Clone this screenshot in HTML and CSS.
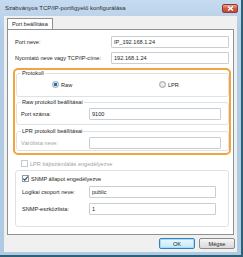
FILE: index.html
```html
<!DOCTYPE html>
<html lang="hu">
<head>
    <meta charset="UTF-8">
    <title>Szabványos TCP/IP-portfigyelő konfigurálása</title>
    <link rel="stylesheet" href="styles.css">
</head>
<body>
    <!-- Dialog window -->
    <div class="window">
        <div class="titlebar">
            <span class="title">Szabványos TCP/IP-portfigyelő konfigurálása</span>
            <span class="close">
                <svg width="7" height="5" viewBox="0 0 7 5"><path d="M1 0.5 L6 4.5 M6 0.5 L1 4.5" stroke="#fff" stroke-width="1.4"/></svg>
            </span>
        </div>

        <div class="client">
            <div class="tabs"><div class="tab">Port beállítása</div></div>

            <div class="panel">
                <div class="row top-row">
                    <label class="lbl wide-lbl">Port neve:</label>
                    <input class="field" type="text" value="IP_192.168.1.24">
                </div>
                <div class="row top-row">
                    <label class="lbl wide-lbl">Nyomtató neve vagy TCP/IP-címe:</label>
                    <input class="field" type="text" value="192.168.1.24">
                </div>

                <!-- Highlighted protocol area -->
                <div class="highlight">
                    <fieldset class="group protocol">
                        <legend>Protokoll</legend>
                        <div class="radios">
                            <span class="opt"><span class="radio on"></span>Raw</span>
                            <span class="opt"><span class="radio"></span>LPR</span>
                        </div>
                    </fieldset>

                    <fieldset class="group raw">
                        <legend>Raw protokoll beállításai</legend>
                        <div class="row">
                            <label class="lbl">Port száma:</label>
                            <input class="field" type="text" value="9100">
                        </div>
                    </fieldset>

                    <fieldset class="group lpr">
                        <legend>LPR protokoll beállításai</legend>
                        <div class="row">
                            <label class="lbl disabled">Várólista neve:</label>
                            <input class="field" type="text" value="">
                        </div>
                    </fieldset>
                </div>

                <div class="checkrow lpr-count">
                    <span class="check off"></span>
                    <span class="disabled">LPR bájtszámlálás engedélyezve</span>
                </div>

                <fieldset class="group snmp">
                    <div class="checkrow">
                        <span class="check">
                            <svg width="7" height="7" viewBox="0 0 7 7"><path d="M1.3 3.6 L2.8 5.1 L5.8 1.6" fill="none" stroke="#2b4a7a" stroke-width="1.2"/></svg>
                        </span>
                        <span>SNMP állapot engedélyezve</span>
                    </div>
                    <div class="row">
                        <label class="lbl">Logikai csoport neve:</label>
                        <input class="field" type="text" value="public">
                    </div>
                    <div class="row">
                        <label class="lbl">SNMP-eszközlista:</label>
                        <input class="field" type="text" value="1">
                    </div>
                </fieldset>
            </div>

            <!-- Dialog buttons -->
            <div class="buttons">
                <button class="btn default">OK</button>
                <button class="btn">Mégse</button>
            </div>
        </div>
    </div>
</body>
</html>
```

FILE: styles.css
```css
/* General */
body {
    margin: 0;
    font-family: 'Liberation Sans', Arial, sans-serif;
    font-size: 5.6px;
    color: #1e1e1e;
    background: #2e6075;
}

/* Window frame */
.window {
    width: 243px;
    height: 257px;
    box-sizing: border-box;
    display: flex;
    flex-direction: column;
    overflow: hidden;
    background: linear-gradient(#c6dbef, #b3cce6 30px, #b0cae4);
    border-right: 2px solid #2e6075;
    border-bottom: 2px solid #2e6075;
}

.titlebar {
    height: 16px;
    flex: none;
    display: flex;
    align-items: center;
    justify-content: space-between;
    padding: 0 3px 0 5px;
    font-size: 6px;
}

.title {
    color: #2a2f36;
}

.close {
    width: 14px;
    height: 7px;
    display: flex;
    align-items: center;
    justify-content: center;
    background: linear-gradient(#e9a597, #cf5a44 50%, #c24a36);
    border: 1px solid #8c3b31;
    border-radius: 2px;
}

/* Client area */
.client {
    flex: 1;
    margin: 0 4px 3px 4px;
    padding: 2px 2px 0 3px;
    background: #f0f0f0;
    display: flex;
    flex-direction: column;
    min-height: 0;
}

.tabs {
    display: flex;
    height: 11px;
    flex: none;
}

.tab {
    height: 11px;
    padding: 0 4px;
    line-height: 11px;
    background: #fff;
    border: 1px solid #8e9194;
    border-bottom: none;
}

.panel {
    width: 227px;
    height: 206px;
    flex: none;
    box-sizing: border-box;
    background: #fff;
    border: 1px solid #8e9194;
    padding-top: 6px;
}

/* Rows and fields */
.row {
    display: flex;
    align-items: center;
}

.top-row {
    padding: 0 4px 0 7px;
    margin-bottom: 4px;
}

.lbl {
    width: 68px;
    flex: none;
    white-space: nowrap;
}

.wide-lbl {
    width: 96px;
}

.field {
    flex: 1;
    min-width: 0;
    height: 12px;
    box-sizing: border-box;
    margin: 0;
    padding: 0 2px;
    font-family: inherit;
    font-size: 5.6px;
    line-height: 10px;
    color: #1e1e1e;
    border: 1px solid #c9ced3;
    border-radius: 1px;
    background: #fff;
    outline: none;
}

.disabled {
    color: #a3a3a3;
}

/* Orange highlight */
.highlight {
    margin: 0 2px 0 5px;
    padding: 0 0 0 1px;
    border: 2px solid #f1a53c;
    border-radius: 5px;
    height: 87px;
    box-sizing: border-box;
}

/* Group boxes */
.group {
    margin: 0;
    padding: 0 7px 0 4px;
    border: 1px solid #dde2e6;
    border-radius: 3px;
    min-width: 0;
}

.group legend {
    padding: 0 1px;
    line-height: 7px;
}

.protocol {
    height: 27px;
    box-sizing: border-box;
}

.radios {
    display: flex;
    padding: 4px 0 0 31px;
}

.opt {
    display: flex;
    align-items: center;
    gap: 2px;
}

.opt:first-child {
    width: 107px;
}

.radio {
    width: 5px;
    height: 5px;
    border-radius: 50%;
    border: 1px solid #9ea3a8;
    background: radial-gradient(#f4f4f4, #d8d8d8);
}

.radio.on {
    background: radial-gradient(circle, #1f5fa8 0, #2c7bc4 1.5px, #dbe5ee 2px);
}

.raw {
    margin-top: 2px;
    padding-top: 2px;
    padding-bottom: 4px;
}

.lpr {
    margin-top: 3px;
    padding-top: 2px;
    padding-bottom: 1px;
}

/* Checkboxes */
.checkrow {
    display: flex;
    align-items: center;
    gap: 2px;
}

.check {
    width: 7px;
    height: 7px;
    box-sizing: border-box;
    border: 1px solid #8f9aa5;
    background: #fff;
    display: flex;
    align-items: center;
    justify-content: center;
}

.check svg {
    flex: none;
}

.check.off {
    border-color: #c5cacf;
}

.lpr-count {
    margin: 5px 0 0 13px;
}

.snmp {
    margin: 3px 4px 0 7px;
    padding: 4px 12px 8px 6px;
    height: 57px;
    box-sizing: border-box;
}

.snmp .checkrow {
    margin-bottom: 4px;
}

.snmp .row + .row {
    margin-top: 5px;
}

.snmp .lbl {
    width: 67px;
}

/* Dialog buttons */
.buttons {
    display: flex;
    justify-content: flex-end;
    gap: 4px;
    margin-top: 3px;
}

.btn {
    width: 36px;
    height: 11px;
    padding: 0;
    font-family: inherit;
    font-size: 5.6px;
    color: #1e1e1e;
    border: 1px solid #8a8a8a;
    border-radius: 2px;
    background: linear-gradient(#f6f6f6, #e6e6e6 50%, #d9d9d9);
}

.btn.default {
    border-color: #3c7fb1;
    box-shadow: inset 0 0 0 1px #9ee0fb;
    background: linear-gradient(#eaf6fd, #d9f0fc 50%, #bee6fd);
}
```
